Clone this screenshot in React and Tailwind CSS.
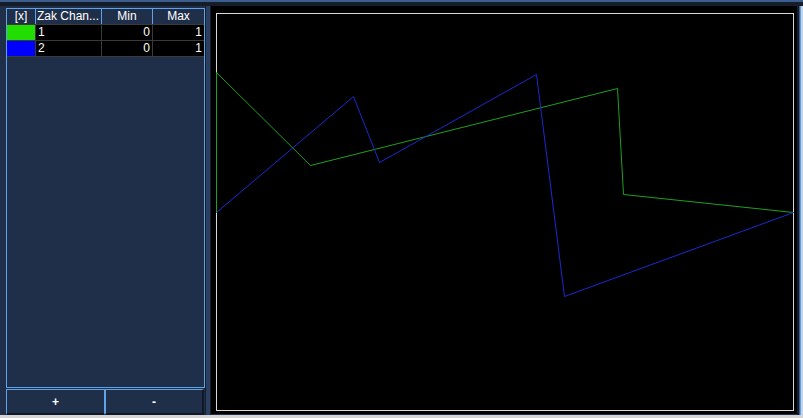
import React from "react";

function App() {
    const rows = [
        { color: "bg-[#22dd00]", name: "1", min: "0", max: "1" },
        { color: "bg-[#0000ff]", name: "2", min: "0", max: "1" },
    ];

    // coordinates relative to the plot frame (frame at 216,13)
    const green = "0.5,199.5 0.5,59.5 94.5,152.5 401.5,75.5 407.5,181.5 577.5,199.5";
    const blue = "0.5,199.5 137.5,83.5 163.5,149.5 320.5,61.5 348.5,283.5 577.5,199.5";

    return (
        <div className="w-[803px] h-[418px] bg-[#1f2f4a] flex flex-col overflow-hidden text-white text-[12px] font-['Liberation_Sans',Arial,sans-serif]">
            <div className="h-[2px] shrink-0 bg-[#3d5f8e]" />
            <div className="h-[4px] shrink-0 bg-[#151d2b]" />

            <div className="flex h-[409px] shrink-0">
                {/* left table panel */}
                <div className="w-[205px] flex flex-col pl-[6px] pt-[2px] pb-[0px]">
                    <div className="flex-1 border border-[#5ea3e6] flex flex-col bg-[#1f2f4a]">
                        <div className="flex h-[15px] leading-[15px] text-center">
                            <div className="w-[29px] border-r border-[#5ea3e6]">[x]</div>
                            <div className="w-[66px] border-r border-[#5ea3e6] text-left pl-[1px] whitespace-nowrap overflow-hidden">Zak Chan...</div>
                            <div className="w-[51px] border-r border-[#5ea3e6]">Min</div>
                            <div className="flex-1">Max</div>
                        </div>
                        {rows.map((r) => (
                            <div key={r.name} className="flex h-[16px] leading-[15px] bg-black border-t border-[#3a3a3a]">
                                <div className={`w-[29px] ${r.color} border-r border-[#3a3a3a]`} />
                                <div className="w-[66px] border-r border-[#3a3a3a] pl-[2px]">{r.name}</div>
                                <div className="w-[51px] border-r border-[#3a3a3a] text-right pr-[2px]">{r.min}</div>
                                <div className="flex-1 text-right pr-[2px]">{r.max}</div>
                            </div>
                        ))}
                        <div className="border-t border-[#3a3a3a]" />
                    </div>
                    <div className="flex h-[26px] mt-[1px]">
                        <button className="w-[99px] border border-[#5ea3e6] border-b-2 border-b-[#101826] bg-[#1f2f4a] text-white text-[12px] font-bold">+</button>
                        <button className="w-[99px] border-l border-t border-[#5ea3e6] border-r-2 border-b-2 border-r-[#101826] border-b-[#101826] bg-[#1f2f4a] text-white text-[12px] font-bold">-</button>
                    </div>
                </div>

                {/* splitter */}
                <div className="w-[6px] flex">
                    <div className="w-[1px] bg-[#151d2b]" />
                    <div className="w-[4px] bg-[#2b3f61]" />
                    <div className="w-[1px] bg-[#151d2b]" />
                </div>

                {/* plot */}
                <div className="w-[586px] h-[408px] bg-black pt-[7px] pl-[5px]">
                    <svg width="579" height="399" className="block">
                        <rect x="0.5" y="0.5" width="577" height="397" fill="none" stroke="#d8d8d8" strokeWidth="1" />
                        <polyline points={green} fill="none" stroke="#1fa01f" strokeWidth="1" />
                        <polyline points={blue} fill="none" stroke="#1a2ad0" strokeWidth="1" />
                    </svg>
                </div>

                {/* right edge */}
                <div className="flex-1 flex">
                    <div className="w-[2px] bg-[#151d2b]" />
                    <div className="w-[1px] bg-[#3d5f8e]" />
                    <div className="w-[1px] bg-[#5ea3e6]" />
                    <div className="flex-1 bg-[#c8d4e4]" />
                </div>
            </div>

            <div className="h-[3px] shrink-0 bg-[#d4d4d4]" />
        </div>
    );
}

export default App;
